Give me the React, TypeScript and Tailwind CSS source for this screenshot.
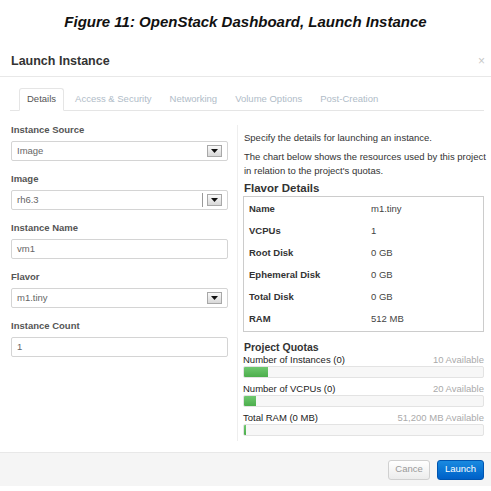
import React from "react";

const font = { fontFamily: '"Liberation Sans", Arial, sans-serif' };

function Arrow({ sep = false }: { sep?: boolean }) {
  return (
    <div className="flex items-center h-full">
      {sep && <div className="w-px h-[14px] bg-[#9a9a9a] mr-[4px]" />}
      <div className="w-[15px] h-[12px] border border-[#a8a8a8] bg-gradient-to-b from-[#fafafa] to-[#d8d8d8] flex items-center justify-center">
        <svg width="7" height="4" viewBox="0 0 7 4">
          <path d="M0 0 L7 0 L3.5 4 Z" fill="#111" />
        </svg>
      </div>
    </div>
  );
}

function Field({ label, value, select, sep }: { label: string; value: string; select?: boolean; sep?: boolean }) {
  return (
    <div className="mb-[12px]">
      <div className="h-[12px] leading-[12px] text-[9.5px] font-bold text-[#555]">{label}</div>
      <div className="mt-[5px] h-[20px] border border-[#d4d4d4] rounded-[2px] bg-white flex items-center justify-between pl-[5px] pr-[5px]">
        <span className="text-[9.5px] text-[#666]">{value}</span>
        {select && <Arrow sep={sep} />}
      </div>
    </div>
  );
}

function Quota({ label, avail, fill }: { label: string; avail: string; fill: number }) {
  return (
    <div className="mb-[5px]">
      <div className="h-[12px] leading-[12px] flex justify-between text-[9.5px]">
        <span className="text-[#222]">{label}</span>
        <span className="text-[#aaa]">{avail}</span>
      </div>
      <div className="h-[12px] border border-[#e3e3e3] rounded-[2px] bg-[#f7f7f7] overflow-hidden">
        <div className="h-full bg-gradient-to-b from-[#6fc86f] to-[#4cae4c]" style={{ width: fill }} />
      </div>
    </div>
  );
}

export default function App() {
  const rows: [string, string][] = [
    ["Name", "m1.tiny"],
    ["VCPUs", "1"],
    ["Root Disk", "0 GB"],
    ["Ephemeral Disk", "0 GB"],
    ["Total Disk", "0 GB"],
    ["RAM", "512 MB"],
  ];
  return (
    <div className="w-[491px] h-[491px] bg-white overflow-hidden" style={font}>
      <div className="h-[46px] pt-[12px]">
        <div className="text-center text-[15px] leading-[20px] font-bold italic text-[#111]">
          Figure 11: OpenStack Dashboard, Launch Instance
        </div>
      </div>
      <div className="h-[31px] border-b border-[#e8e8e8] flex items-center justify-between pl-[11px] pr-[6px]">
        <span className="text-[12.5px] font-bold text-[#333]">Launch Instance</span>
        <span className="text-[12px] text-[#c8c8c8] leading-none">×</span>
      </div>
      <div className="pt-[11px] ml-[10px] mr-[7px]">
        <div className="flex border-b border-[#e5e5e5] pl-[9px] h-[23px] text-[9.5px]">
          <div className="px-[7px] h-[23px] -mb-px border border-[#e5e5e5] border-b-white bg-white rounded-t-[3px] flex items-center text-[#555]">
            Details
          </div>
          {["Access & Security", "Networking", "Volume Options", "Post-Creation"].map((t) => (
            <div key={t} className="ml-[4px] px-[7px] flex items-center text-[#b0bcc8]">
              {t}
            </div>
          ))}
        </div>
      </div>
      <div className="flex mt-[13px] h-[317px] overflow-hidden">
        <div className="ml-[11px] w-[217px]">
          <Field label="Instance Source" value="Image" select />
          <Field label="Image" value="rh6.3" select sep />
          <Field label="Instance Name" value="vm1" />
          <Field label="Flavor" value="m1.tiny" select />
          <Field label="Instance Count" value="1" />
        </div>
        <div className="ml-[9px] mt-[1px] w-[247px] h-[316px] border-l border-[#eeeeee] pl-[6px] pt-[6px]">
          <div className="text-[9.5px] leading-[14px] text-[#333] whitespace-nowrap">Specify the details for launching an instance.</div>
          <div className="mt-[5px] text-[9.5px] leading-[14px] text-[#333] whitespace-nowrap">
            The chart below shows the resources used by this project
            <br />
            in relation to the project's quotas.
          </div>
          <div className="mt-[3px] text-[11.5px] leading-[14px] font-bold text-[#333]">Flavor Details</div>
          <div className="mt-[1px] -ml-px border border-[#cccccc] py-[1px]">
            {rows.map(([k, v]) => (
              <div key={k} className="h-[22px] flex items-center text-[9.5px] pl-[5px]">
                <span className="w-[122px] font-bold text-[#333]">{k}</span>
                <span className="text-[#444]">{v}</span>
              </div>
            ))}
          </div>
          <div className="mt-[9px] text-[10.5px] leading-[13px] font-bold text-[#333]">Project Quotas</div>
          <div className="-ml-px">
            <Quota label="Number of Instances (0)" avail="10 Available" fill={24} />
            <Quota label="Number of VCPUs (0)" avail="20 Available" fill={12} />
            <Quota label="Total RAM (0 MB)" avail="51,200 MB Available" fill={2} />
          </div>
        </div>
      </div>
      <div className="mt-[11px] h-[34px] border-t border-[#e8e8e8] bg-[#f5f5f5] flex items-center justify-end pr-[7px] gap-[7px]">
        <div className="h-[20px] w-[42px] border border-[#d0d0d0] rounded-[3px] bg-gradient-to-b from-white to-[#ececec] flex items-center justify-center text-[9.5px] text-[#999]">
          Cance
        </div>
        <div className="h-[20px] w-[47px] border border-[#0055b0] rounded-[3px] bg-gradient-to-b from-[#1a8ae0] to-[#0060c8] flex items-center justify-center text-[9.5px] text-white">
          Launch
        </div>
      </div>
    </div>
  );
}
